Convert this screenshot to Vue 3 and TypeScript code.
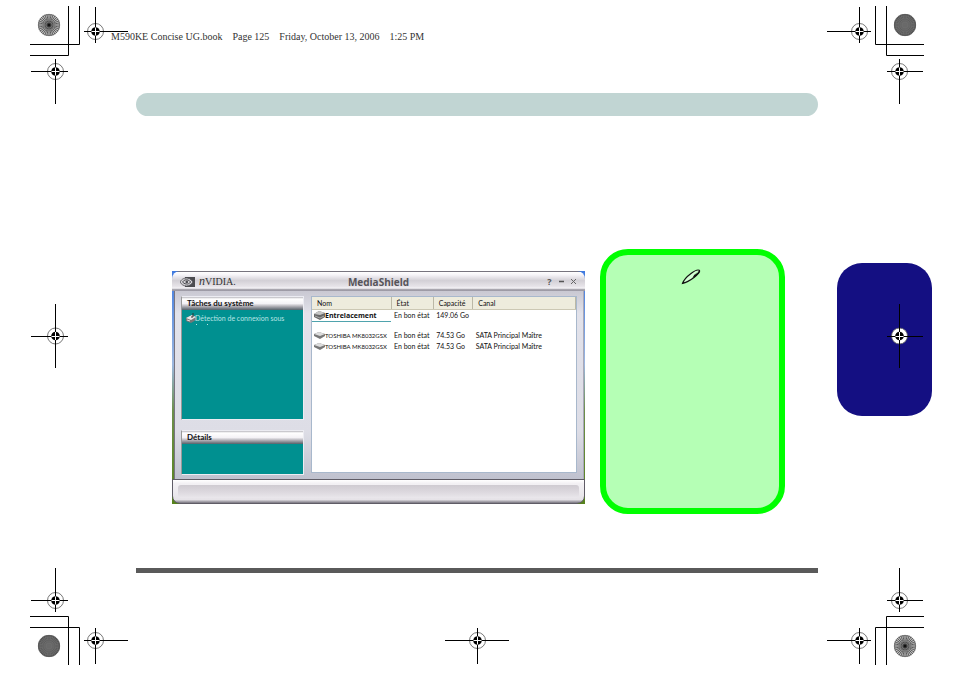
<script setup lang="ts">
interface Mark {
  cx: number
  cy: number
  x1: number
  x2: number
  y1: number
  y2: number
}

interface Corner {
  id: string
  width: number
  height: number
  marks: Mark[]
  trim: string
  rosette?: { cx: number; cy: number; dark: boolean }
}

const corners: Corner[] = [
  {
    id: 'top-left', width: 132, height: 110,
    trim: 'M68.5 6V55.5H30M79.5 6V44.5H30',
    rosette: { cx: 49, cy: 25, dark: false },
    marks: [
      { cx: 95.5, cy: 31.5, x1: 84, x2: 128, y1: 7, y2: 43 },
      { cx: 55.5, cy: 71.5, x1: 31, x2: 68, y1: 59, y2: 104 },
    ],
  },
  {
    id: 'top-right', width: 132, height: 110,
    trim: 'M53.5 6V44.5H102M64.5 6V55.5H102',
    rosette: { cx: 83, cy: 25, dark: true },
    marks: [
      { cx: 37.5, cy: 31.5, x1: 5, x2: 49, y1: 7, y2: 43 },
      { cx: 77.5, cy: 71.5, x1: 65, x2: 101, y1: 59, y2: 104 },
    ],
  },
  {
    id: 'bottom-left', width: 132, height: 110,
    trim: 'M68.5 102V53.5H30M79.5 102V64.5H30',
    rosette: { cx: 49, cy: 83, dark: true },
    marks: [
      { cx: 55.5, cy: 37.5, x1: 31, x2: 68, y1: 5, y2: 49 },
      { cx: 95.5, cy: 77.5, x1: 84, x2: 128, y1: 65, y2: 101 },
    ],
  },
  {
    id: 'bottom-right', width: 132, height: 110,
    trim: 'M53.5 102V64.5H102M64.5 102V53.5H102',
    rosette: { cx: 83, cy: 83, dark: false },
    marks: [
      { cx: 77.5, cy: 37.5, x1: 65, x2: 101, y1: 5, y2: 49 },
      { cx: 37.5, cy: 77.5, x1: 5, x2: 49, y1: 65, y2: 101 },
    ],
  },
  {
    id: 'middle-left', width: 80, height: 67, trim: '',
    marks: [{ cx: 55.5, cy: 33, x1: 31, x2: 68, y1: 1, y2: 65 }],
  },
  {
    id: 'middle-right', width: 80, height: 67, trim: '',
    marks: [{ cx: 25.5, cy: 33, x1: 13, x2: 49, y1: 1, y2: 65 }],
  },
  {
    id: 'bottom-centre', width: 66, height: 50, trim: '',
    marks: [{ cx: 33.5, cy: 17.5, x1: 1, x2: 65, y1: 5, y2: 41 }],
  },
]

const rays: number[] = Array.from({ length: 16 }, (_, i) => i * 11.25)

const stamp: string[] = [
  'M590KE Concise UG.book',
  'Page 125',
  'Friday, October 13, 2006',
  '1:25 PM',
]

interface Disk {
  name: string
  state: string
  size: string
  channel: string
}

const disks: Disk[] = [
  { name: 'TOSHIBA MK8032GSX', state: 'En bon état', size: '74.53 Go', channel: 'SATA Principal Maître' },
  { name: 'TOSHIBA MK8032GSX', state: 'En bon état', size: '74.53 Go', channel: 'SATA Principal Maître' },
]
</script>

<template>
  <div class="sheet">
    <header class="stamp">
      <span v-for="part in stamp" :key="part">{{ part }}</span>
    </header>

    <main class="columns">
      <div class="page">
        <div class="banner"></div>
        <div class="content">
          <div class="desktop">
            <section class="window" aria-label="MediaShield">
              <div class="titlebar">
                <div class="brand">
                  <svg width="15" height="10" viewBox="0 0 15 10" aria-hidden="true">
                    <rect x="5" width="10" height="10" fill="#4c4c50" />
                    <path d="M0 5C2 1.500 5 .7 8 1.200C10.500 1.700 12 3.500 13 5C11.500 7.500 9 9 6.500 9C3.500 9 1.500 7.500 0 5Z" fill="#d5d3d8" stroke="#4c4c50" stroke-width=".8" />
                    <path d="M2.500 5C4 2.800 6 2.400 8 3C9.300 3.400 10 4.200 10.700 5C9.500 6.500 8 7.300 6.300 7C4.500 6.800 3.300 6 2.500 5Z" fill="none" stroke="#4c4c50" />
                    <circle cx="6.800" cy="4.900" r="1.300" fill="#4c4c50" />
                  </svg>
                  <span class="wordmark"><i>n</i>VIDIA.</span>
                </div>
                <h1>MediaShield</h1>
                <div class="controls">
                  <button type="button">?</button>
                  <button type="button" aria-label="Réduire">
                    <svg width="7" height="7" viewBox="0 0 7 7"><path d="M1 3.500H6" stroke="#555" stroke-width="1.500" /></svg>
                  </button>
                  <button type="button" aria-label="Fermer">
                    <svg width="7" height="7" viewBox="0 0 7 7"><path d="M1 1L6 6M6 1L1 6" stroke="#666" /></svg>
                  </button>
                </div>
              </div>

              <div class="body">
                <aside class="side">
                  <section class="panel tasks">
                    <h2>Tâches du système</h2>
                    <a href="#" class="task">
                      <svg width="24" height="13" viewBox="0 0 24 13" aria-hidden="true">
                        <path d="M1 5L7 2L11 4V7L6 10L1 8Z" fill="#777" />
                        <path d="M1 5L7 2L11 4L6 7Z" fill="#e6e6e6" />
                        <path d="M8 0V4L6 4" fill="none" stroke="#333" />
                        <path d="M2 7L5 8" stroke="#ddd" />
                        <path d="M11 11.500h1M22 11.500h1" stroke="#b9e4e4" />
                      </svg>
                      <span>Détection de connexion sous</span>
                    </a>
                  </section>
                  <section class="panel details">
                    <h2>Détails</h2>
                  </section>
                </aside>

                <div class="list">
                  <table>
                    <colgroup>
                      <col class="c-name" /><col class="c-state" /><col class="c-size" /><col class="c-channel" />
                    </colgroup>
                    <thead>
                      <tr><th>Nom</th><th>État</th><th>Capacité</th><th>Canal</th></tr>
                    </thead>
                    <tbody>
                      <tr class="array">
                        <td>
                          <div class="name">
                            <svg width="11" height="9" viewBox="0 0 11 9" aria-hidden="true">
                              <path d="M0 3L5 0L11 2V6L6 9L0 6Z" fill="#686868" />
                              <path d="M0 3L5 0L11 2L6 4Z" fill="#c8c8c8" />
                              <path d="M1 5L6 7L10 5" fill="none" stroke="#bbb" stroke-width=".8" />
                            </svg>
                            <span>Entrelacement</span>
                          </div>
                        </td>
                        <td>En bon état</td><td>149.06 Go</td><td></td>
                      </tr>
                      <tr class="spacer"><td colspan="4"></td></tr>
                      <tr v-for="(disk, i) in disks" :key="i" class="disk">
                        <td>
                          <div class="name">
                            <svg width="11" height="7" viewBox="0 0 11 7" aria-hidden="true">
                              <path d="M0 2L5 0L11 2V4L6 7L0 4Z" fill="#777" />
                              <path d="M0 2L5 0L11 2L6 4Z" fill="#ddd" />
                            </svg>
                            <span>{{ disk.name }}</span>
                          </div>
                        </td>
                        <td>{{ disk.state }}</td>
                        <td>{{ disk.size }}</td>
                        <td>{{ disk.channel }}</td>
                      </tr>
                    </tbody>
                  </table>
                </div>
              </div>

              <div class="statusbar"><div class="groove"></div></div>
            </section>
          </div>

          <aside class="note">
            <svg width="20" height="16" viewBox="0 0 20 16" aria-hidden="true">
              <path d="M1.500 14.500C2.500 11.500 6 7.500 10 4.500C13.500 1.800 17 .6 18.300 1.300C19.500 2.500 17 5.500 13 8.500C9 11.500 4.500 13.800 1.500 14.500Z" fill="#d4ffd4" stroke="#111" stroke-width="1.200" />
              <path d="M11.500 8.800L13.500 5.500L18.300 1.800C19 3.500 17 5.700 13.500 8Z" fill="#111" />
              <path d="M13.500 5.500L17 2.800" stroke="#b5ffb5" stroke-width="1" />
              <path d="M1 15L2.500 12.300L4 13.500Z" fill="#111" />
            </svg>
          </aside>
        </div>
        <hr class="rule" />
      </div>
      <div class="tab"></div>
    </main>

    <svg
      v-for="corner in corners"
      :key="corner.id"
      class="marks"
      :class="corner.id"
      :width="corner.width"
      :height="corner.height"
      aria-hidden="true"
    >
      <path :d="corner.trim" fill="none" stroke="#000" />
      <g v-if="corner.rosette" :transform="`translate(${corner.rosette.cx} ${corner.rosette.cy})`">
        <circle r="11" :fill="corner.rosette.dark ? '#555' : '#c4c4c4'" />
        <path
          v-for="angle in rays"
          :key="angle"
          d="M-11 0H11"
          :transform="`rotate(${angle})`"
          :stroke="corner.rosette.dark ? '#6a6a6a' : '#444'"
          stroke-width=".8"
        />
        <circle v-for="r in [3, 5, 7, 9]" :key="r" :r="r" fill="none" :stroke="corner.rosette.dark ? '#777' : '#999'" stroke-width=".4" />
        <circle r="10.700" fill="none" stroke="#555" stroke-width=".6" />
        <circle v-if="!corner.rosette.dark" r="1.500" fill="#111" />
      </g>
      <g v-for="(m, i) in corner.marks" :key="i">
        <circle :cx="m.cx" :cy="m.cy" r="8" fill="#fff" stroke="#555" stroke-width=".8" />
        <path :d="`M${m.x1} ${Math.floor(m.cy) + 0.5}H${m.x2}M${m.cx} ${m.y1}V${m.y2}`" stroke="#000" />
        <circle :cx="m.cx" :cy="m.cy" r="4.300" fill="#000" />
        <path :d="`M${m.cx - 4} ${Math.floor(m.cy) + 0.5}h8M${m.cx} ${m.cy - 4}v8`" stroke="#fff" />
      </g>
    </svg>
  </div>
</template>

<style>
body {
  background: #fff;
}
</style>

<style scoped>
.sheet {
  position: relative;
  box-sizing: border-box;
  min-height: 100vh;
  font-family: Lato, "Open Sans", sans-serif;
  color: #111;
}

.stamp {
  display: flex;
  gap: 10px;
  box-sizing: border-box;
  height: 93px;
  padding: 31px 0 0 111px;
  font: 10px/12px "Liberation Serif", serif;
  color: #333;
  white-space: nowrap;
}

.columns {
  display: grid;
  grid-template-columns: 1fr 95px;
  gap: 19px;
  padding: 0 22px 0 136px;
}

.banner {
  height: 23px;
  border-radius: 12px;
  background: #c1d5d3;
}

.content {
  display: flex;
  align-items: flex-start;
  gap: 15px;
  padding: 133px 33px 54px 36px;
}

.desktop {
  flex: 1;
  margin-top: 22px;
  background: linear-gradient(#3f7ae0, #9db8e0 40%, #6d8f4c 60%, #56821c);
}

.window {
  overflow: hidden;
  border-radius: 8px;
}

.titlebar {
  display: grid;
  grid-template-columns: 1fr auto 1fr;
  align-items: center;
  height: 20px;
  padding: 0 8px;
  border-top: 1px solid #77747e;
  box-sizing: border-box;
  background: linear-gradient(#fff, #f6f4f8 15%, #d3d0d6 45%, #e6e3e8 75%, #f4f2f6 85%, #8b8892 95%, #b2b0bc);
}

.brand {
  display: flex;
  align-items: center;
  gap: 4px;
}

.wordmark {
  font: 10px/12px "Liberation Serif", serif;
  color: #333;
}

.wordmark i {
  font-size: 12px;
}

h1 {
  margin: 0;
  font: 700 10px/14px "Open Sans", sans-serif;
  color: #56545a;
}

.controls {
  display: flex;
  justify-content: flex-end;
  gap: 5px;
}

.controls button {
  display: flex;
  align-items: center;
  justify-content: center;
  width: 7px;
  height: 12px;
  padding: 0;
  border: 0;
  background: none;
  font: 700 9px/12px "Open Sans", sans-serif;
  color: #555;
}

.body {
  display: grid;
  grid-template-columns: 123fr 266fr;
  gap: 7px;
  margin: 0 1px 0 2px;
  padding: 5px 6px 4px 6px;
  border-left: 1px solid #777480;
  border-right: 1px solid #a9a8b8;
  background: linear-gradient(#c9c8d2, #e2e2ea 12%, #dddde6 75%, #bfc1ce);
}

.side {
  display: flex;
  flex-direction: column;
  gap: 10px;
}

.panel {
  border: 1px solid #ececf2;
  border-left-color: #999;
  background: #009090;
}

.tasks {
  height: 122px;
}

.details {
  height: 43px;
}

.panel h2 {
  height: 13px;
  margin: 0;
  padding-left: 5px;
  font-size: 8px;
  line-height: 13px;
  font-weight: 700;
  background: linear-gradient(#b8b6bd, #fff 15%, #f4f2f6 50%, #a7a6ad 75%, #55616a);
}

.task {
  display: flex;
  padding: 3px 10px 0 3px;
  font-size: 7px;
  line-height: 10px;
  color: #b9e4e4;
  text-decoration: none;
}

.task svg {
  flex: none;
  margin-right: -14px;
}

.list {
  height: 175px;
  border: 1px solid #a8b8cc;
  background: #fff;
}

table {
  width: 100%;
  table-layout: fixed;
  border-collapse: collapse;
  font-size: 7px;
  line-height: 11px;
}

.c-name { width: 30%; }
.c-state { width: 16%; }
.c-size { width: 15%; }
.c-channel { width: 39%; }

th {
  height: 12px;
  padding: 0 0 0 5px;
  border-right: 1px solid #bbb8a6;
  border-bottom: 1px solid #ccc8b4;
  background: #eeecdd;
  font-weight: 400;
  text-align: left;
}

td {
  height: 11px;
  padding: 0 0 0 3px;
  white-space: nowrap;
}

td:first-child {
  padding-left: 2px;
}

.array td:first-child {
  border-bottom: 1px solid #4fa3ad;
  font-family: "Open Sans", sans-serif;
  font-weight: 700;
}

.spacer td {
  height: 8px;
}

.disk .name {
  font-size: 6px;
}

.name {
  display: flex;
  align-items: center;
}

.name svg {
  flex: none;
}

.statusbar {
  box-sizing: border-box;
  height: 25px;
  padding: 5px;
  border: 1px solid #5f5c66;
  border-radius: 0 0 8px 8px;
  background: linear-gradient(#fff, #f3f1f4 15%, #e6e3e8 85%, #77747e);
}

.groove {
  height: 13px;
  border-radius: 3px;
  background: linear-gradient(#cfcbd1, #dedae0 60%, #eae7ec);
}

.note {
  display: flex;
  justify-content: center;
  box-sizing: border-box;
  width: 185px;
  height: 265px;
  padding: 14px 4px 0 0;
  border: 6px solid #00ff00;
  border-radius: 28px;
  background: #b5ffb5;
}

.rule {
  height: 5px;
  margin: 0;
  border: 0;
  background: #5a5a5a;
}

.tab {
  height: 153px;
  margin-top: 170px;
  border-radius: 25px;
  background: #140f82;
}

.marks {
  position: absolute;
  display: block;
}

.top-left { top: 0; left: 0; }
.top-right { top: 0; right: 0; }
.bottom-left { bottom: 0; left: 0; }
.bottom-right { bottom: 0; right: 0; }
.middle-left { top: calc(50% - 34px); left: 0; }
.middle-right { top: calc(50% - 34px); right: 0; }
.bottom-centre { bottom: 0; left: calc(50% - 33px); }
</style>
